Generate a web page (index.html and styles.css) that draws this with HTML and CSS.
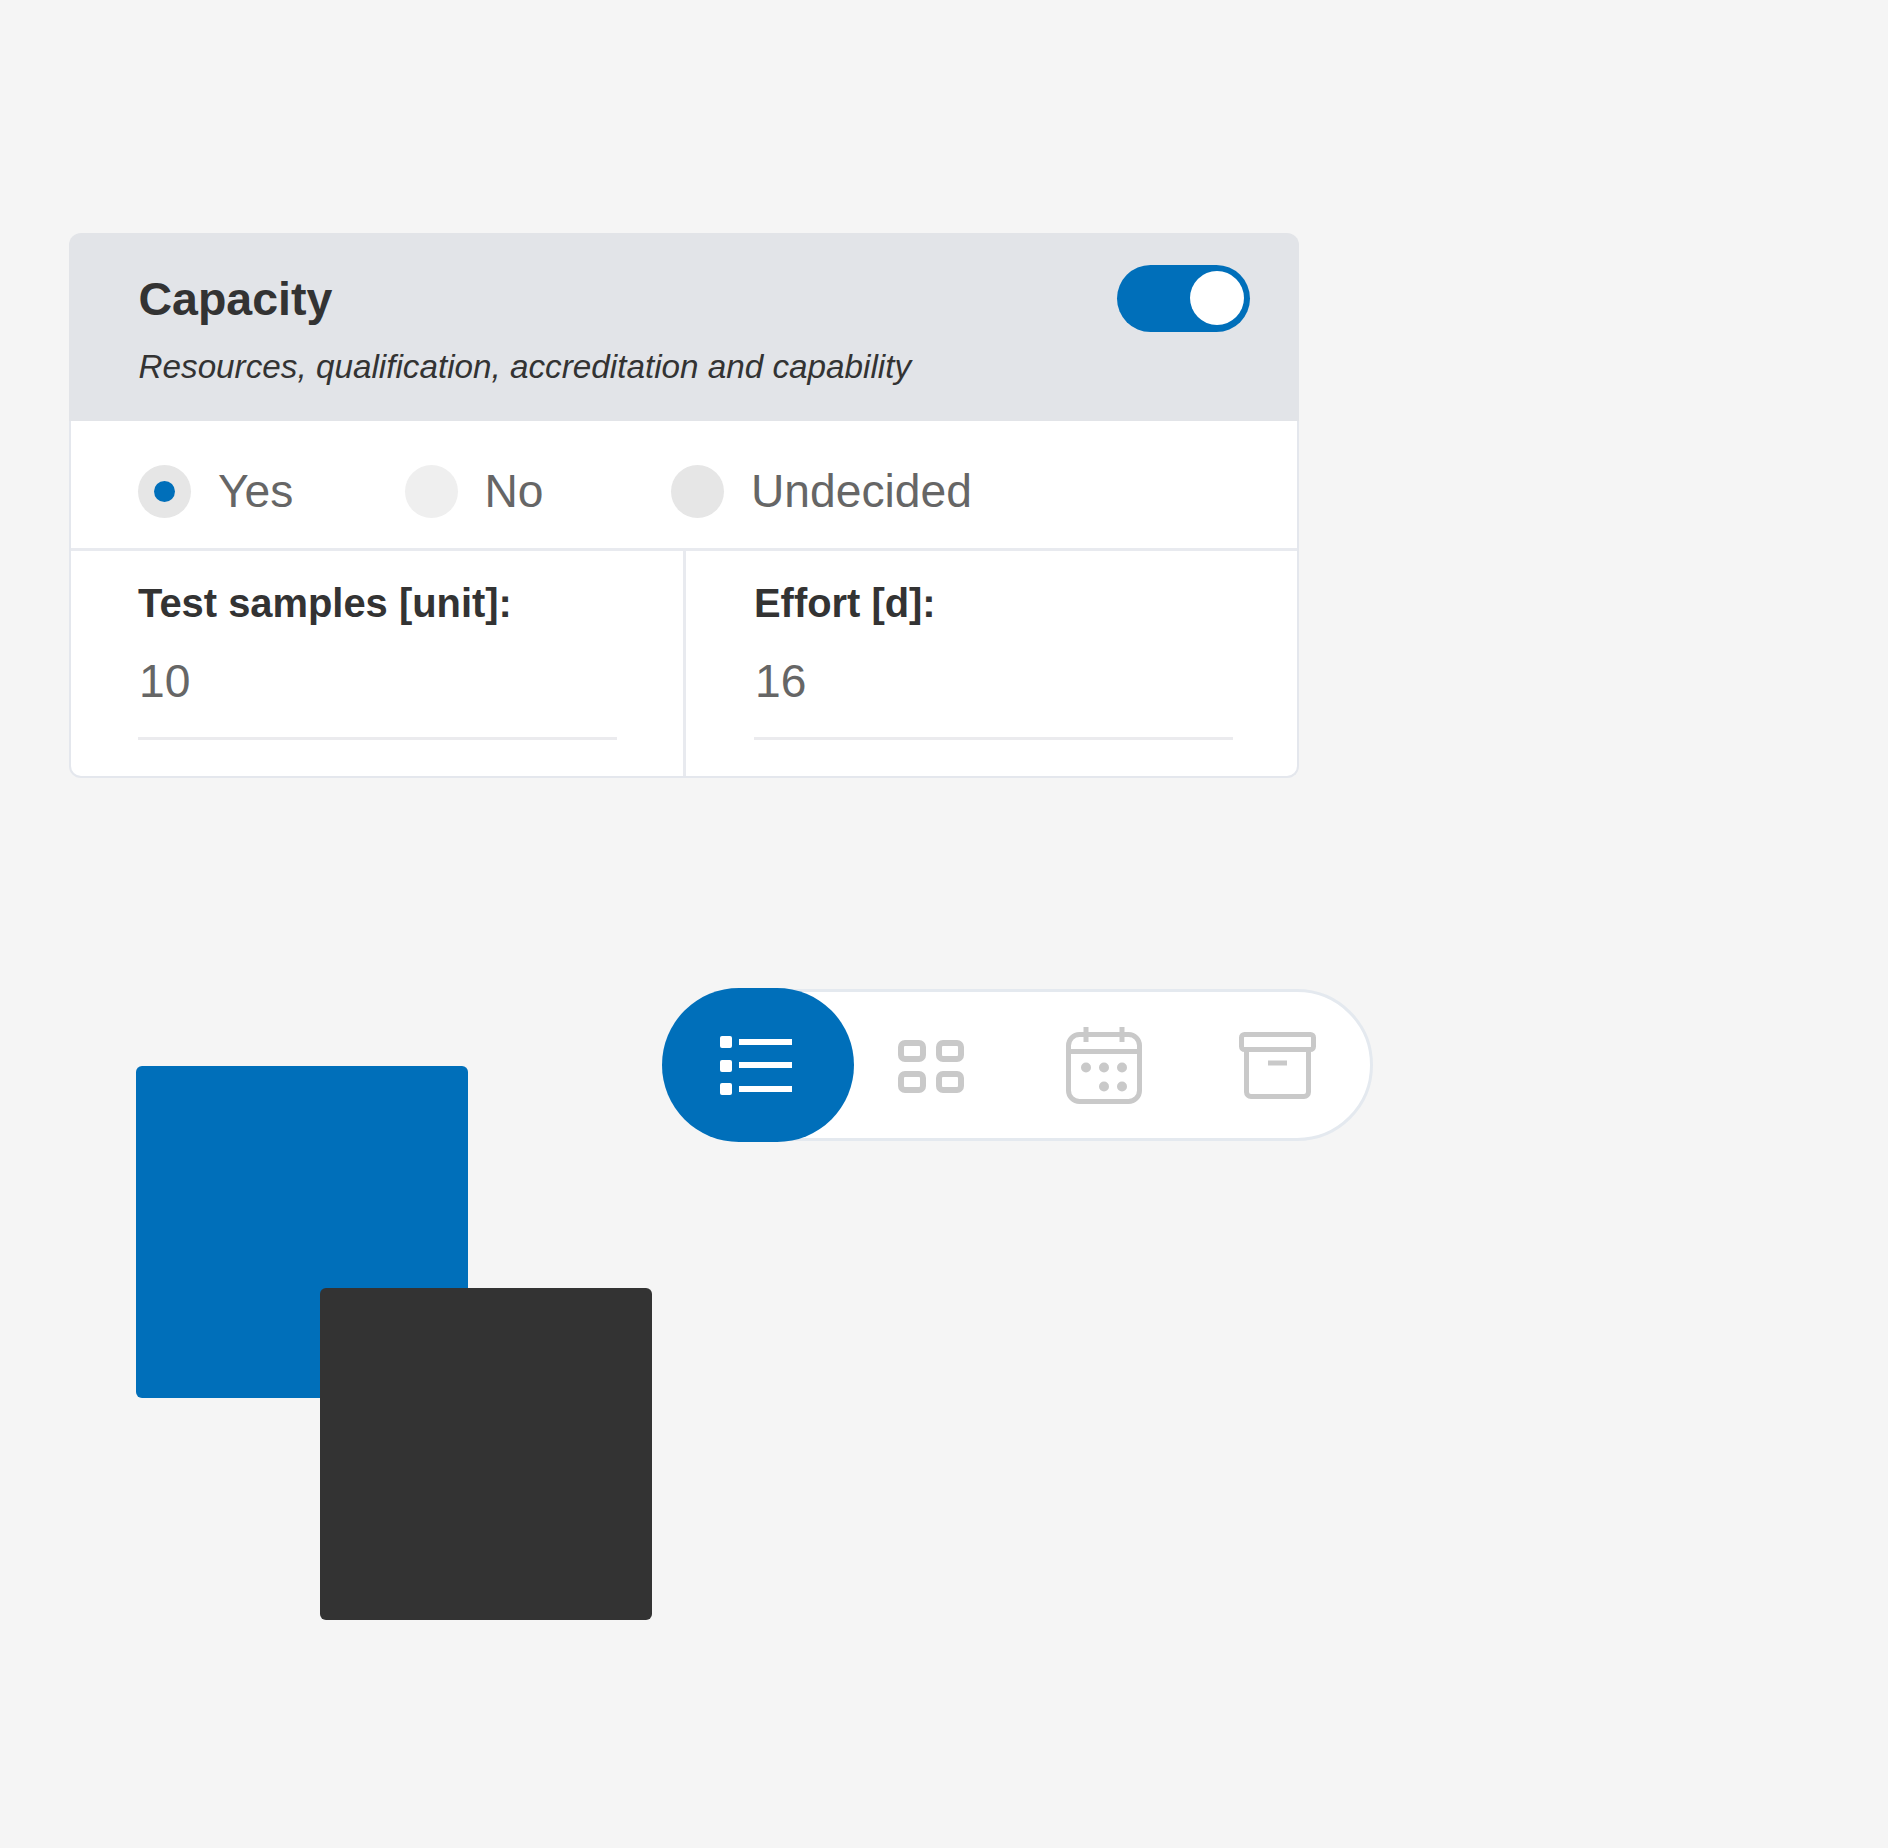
FILE: index.html
```html
<!DOCTYPE html>
<html lang="en">
<head>
  <meta charset="UTF-8" />
  <meta name="viewport" content="width=device-width, initial-scale=1.0" />
  <title>Capacity</title>
  <link rel="stylesheet" href="styles.css">
</head>
<body>
  <div class="card">
    <div class="card-head">
      <div>
        <h2 class="card-title">Capacity</h2>
        <p class="card-sub">Resources, qualification, accreditation and capability</p>
      </div>
      <div class="toggle"><span class="toggle-knob"></span></div>
    </div>
    <div class="card-body">
      <div class="radio-row">
        <div class="radio-option"><span class="radio radio-on"></span>Yes</div>
        <div class="radio-option"><span class="radio radio-light"></span>No</div>
        <div class="radio-option"><span class="radio"></span>Undecided</div>
      </div>
      <div class="field-row">
        <div class="field field-left">
          <div class="field-label">Test samples [unit]:</div>
          <div class="field-value">10</div>
        </div>
        <div class="field">
          <div class="field-label">Effort [d]:</div>
          <div class="field-value">16</div>
        </div>
      </div>
    </div>
  </div>

  <div class="lower">
    <div class="swatches">
      <div class="swatch swatch-blue"></div>
      <div class="swatch swatch-dark"></div>
    </div>

    <div class="view-pill">
      <div class="view-item view-active">
        <svg width="72" height="60" viewBox="0 0 72 60" fill="#fff">
          <rect x="0" y="0" width="12" height="12" rx="2"/>
          <rect x="0" y="24" width="12" height="12" rx="2"/>
          <rect x="0" y="47" width="12" height="12" rx="2"/>
          <rect x="19" y="3" width="53" height="6"/>
          <rect x="19" y="26" width="53" height="6"/>
          <rect x="19" y="50" width="53" height="6"/>
        </svg>
      </div>
      <div class="view-item view-after">
        <svg class="icon-grid" width="66" height="53" viewBox="0 0 66 53" fill="none" stroke="#c9c9c9" stroke-width="6">
          <rect x="3" y="3" width="22" height="16" rx="4"/>
          <rect x="41" y="3" width="22" height="16" rx="4"/>
          <rect x="3" y="34" width="22" height="16" rx="4"/>
          <rect x="41" y="34" width="22" height="16" rx="4"/>
        </svg>
      </div>
      <div class="view-item">
        <svg width="76" height="77" viewBox="0 0 76 77" fill="none" stroke="#c9c9c9" stroke-width="5">
          <rect x="2.5" y="7.5" width="71" height="67" rx="11"/>
          <path d="M2.5 24.5H73.5"/>
          <path d="M20 0V15M56 0V15"/>
          <g fill="#c9c9c9" stroke="none">
            <circle cx="20" cy="40.5" r="5"/>
            <circle cx="38" cy="40.5" r="5"/>
            <circle cx="56" cy="40.5" r="5"/>
            <circle cx="38" cy="59.5" r="5"/>
            <circle cx="56" cy="59.5" r="5"/>
          </g>
        </svg>
      </div>
      <div class="view-item">
        <svg class="icon-archive" width="77" height="67" viewBox="0 0 77 67" fill="none" stroke="#c9c9c9" stroke-width="5">
          <rect x="2.5" y="2.5" width="72" height="15" rx="3"/>
          <path d="M7.5 17.5V60a4.5 4.5 0 0 0 4.5 4.5H65a4.5 4.5 0 0 0 4.5-4.5V17.5"/>
          <path d="M29 31H48"/>
        </svg>
      </div>
    </div>
  </div>
</body>
</html>
```

FILE: styles.css
```css
body {
  margin: 0;
  min-height: 1848px;
  background: #f5f5f5;
  font-family: "Liberation Sans", Arial, sans-serif;
  color: #333;
}

/* card */
.card { width: 1230px; margin: 0 0 0 69px; padding-top: 233px; }
.card-head {
  display: flex;
  justify-content: space-between;
  box-sizing: border-box;
  height: 188px;
  padding: 31.5px 49px 0 69.5px;
  background: #e2e4e8;
  border-radius: 12px 12px 0 0;
}
.card-title { margin: 7.5px 0 0; font-size: 46.5px; line-height: 54px; font-weight: bold; }
.card-sub { margin: 21px 0 0; font-size: 33.25px; line-height: 40px; font-style: italic; }

.toggle {
  display: flex;
  justify-content: flex-end;
  align-items: center;
  box-sizing: border-box;
  width: 133px;
  height: 67px;
  padding-right: 6.5px;
  background: #006fba;
  border-radius: 34px;
}
.toggle-knob { width: 54px; height: 54px; background: #fff; border-radius: 50%; }

.card-body {
  background: #fff;
  border: 2px solid #e4e7ed;
  border-top: none;
  border-radius: 0 0 12px 12px;
}

.radio-row {
  display: flex;
  align-items: center;
  box-sizing: border-box;
  height: 130px;
  padding: 13px 0 0 67px;
  border-bottom: 3px solid #e8eaef;
  font-size: 46.2px;
  color: #666;
}
.radio-option { display: flex; align-items: center; gap: 27px; flex: none; width: 266.5px; white-space: nowrap; }
.radio {
  display: flex;
  flex: none;
  align-items: center;
  justify-content: center;
  width: 53px;
  height: 53px;
  background: #e6e6e6;
  border-radius: 50%;
}
.radio-light { background: #efefef; }
.radio-on::after {
  content: "";
  width: 21px;
  height: 21px;
  background: #006fba;
  border-radius: 50%;
}

.field-row { display: flex; }
.field { flex: 1; padding: 28px 0 36px 68px; }
.field-left { flex: none; width: 615px; box-sizing: border-box; padding-left: 67px; border-right: 3px solid #e8eaef; }
.field-label { font-size: 39.9px; line-height: 48px; font-weight: bold; }
.field-value {
  width: 479px;
  margin-top: 27px;
  padding-bottom: 29px;
  border-bottom: 3px solid #ebebee;
  font-size: 46.2px;
  line-height: 54px;
  text-indent: 1px;
  color: #666;
}

/* lower area */
.lower { display: flex; align-items: flex-start; margin: 210px 0 0 136px; }
.swatches { width: 516px; margin-top: 78px; }
.swatch { width: 332px; height: 332px; border-radius: 6px; }
.swatch-blue { background: #006fba; }
.swatch-dark { margin: -110px 0 0 184px; background: #333; }

.view-pill {
  display: flex;
  align-items: center;
  box-sizing: border-box;
  width: 711px;
  height: 152px;
  margin: 1px 0 0 10px;
  background: #fff;
  border: 3px solid #e4e9ef;
  border-radius: 76px;
}
.view-item { display: flex; align-items: center; justify-content: center; width: 173px; flex: none; }
.view-active {
  width: 192px;
  height: 154px;
  margin: 0 -10px 0 -3px;
  padding: 2px 4px 0 0;
  box-sizing: border-box;
  background: #006fba;
  border-radius: 77px;
}
.icon-grid { margin-top: 3px; }
.icon-archive { margin: 1px 0 0 2px; }
```
